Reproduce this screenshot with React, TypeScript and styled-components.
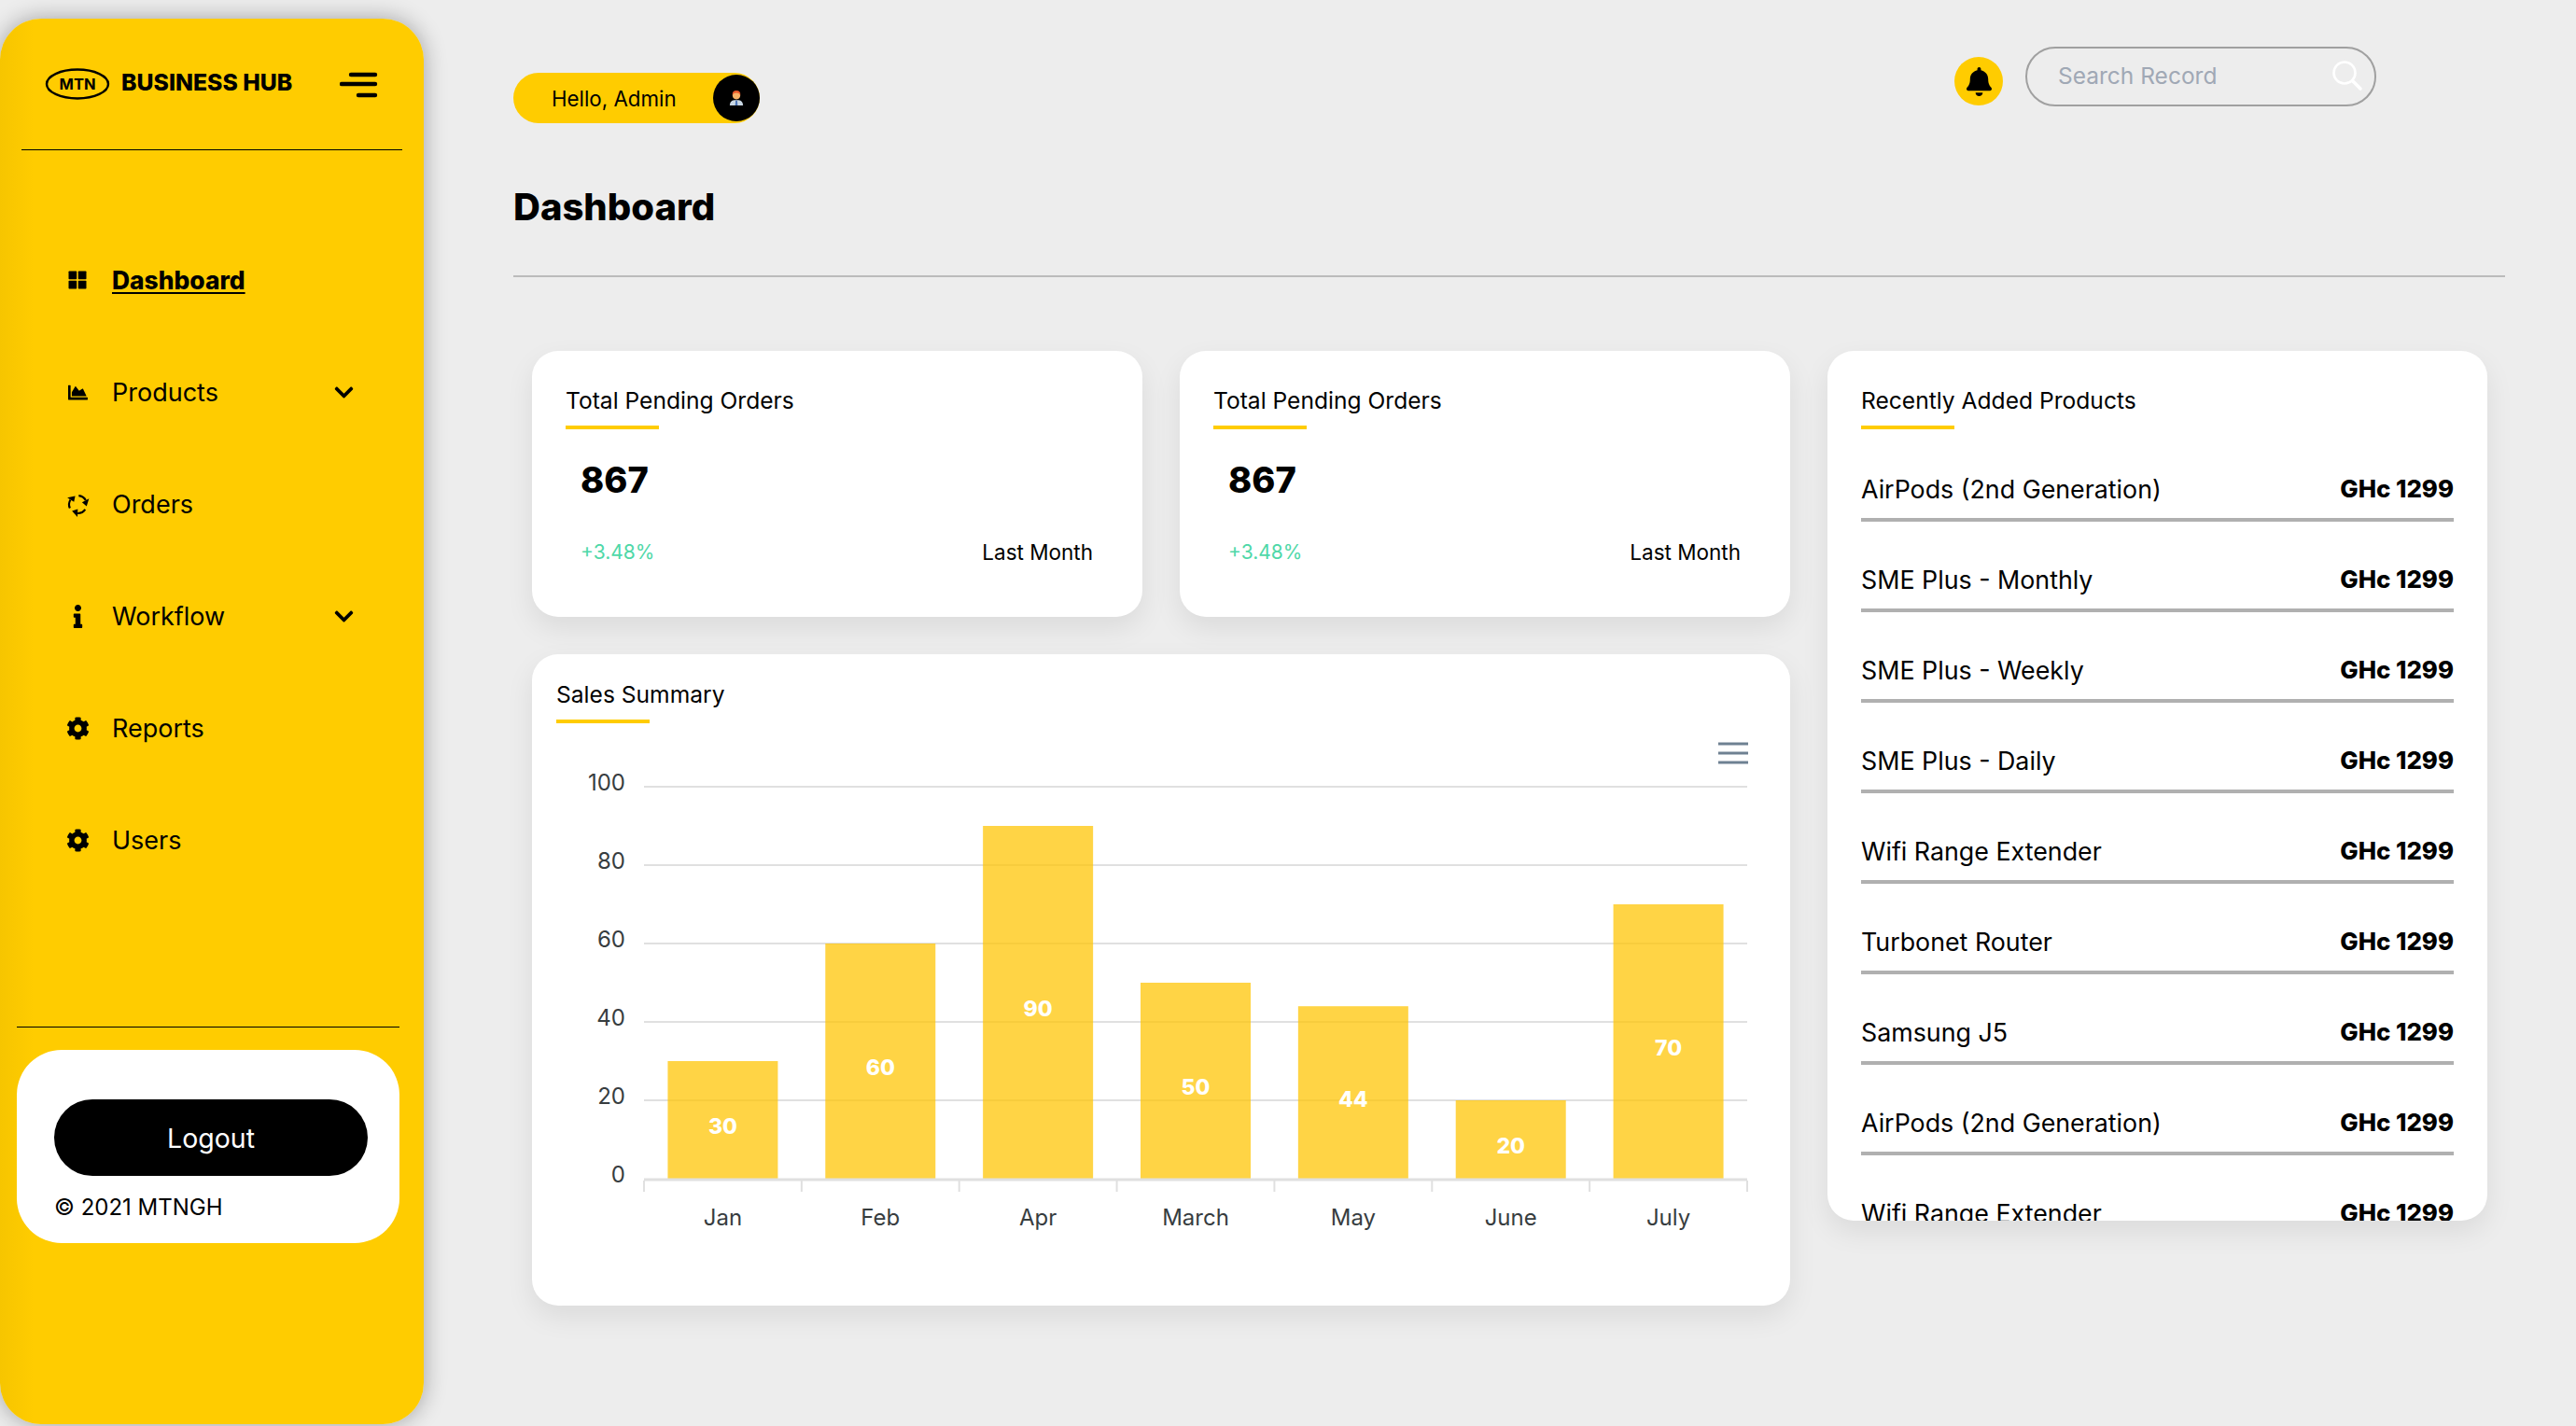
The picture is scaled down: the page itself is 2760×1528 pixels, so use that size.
import styled, { createGlobalStyle } from "styled-components";
import { FaBell, FaChartArea, FaChevronDown, FaCog, FaInfo } from "react-icons/fa";
import type { ReactNode } from "react";

const GlobalStyle = createGlobalStyle`
  html, body {
    margin: 0;
    padding: 0;
    background: #ededed;
    overflow: hidden;
  }
  * {
    box-sizing: border-box;
  }
`;

const Page = styled.div`
  display: flex;
  width: 2760px;
  height: 1528px;
  overflow: hidden;
  background: #ededed;
  font-family: "Inter", "Noto Sans", sans-serif;
  color: #000;
`;

const Sidebar = styled.aside`
  width: 454px;
  height: 1506px;
  margin-top: 20px;
  flex-shrink: 0;
  display: flex;
  flex-direction: column;
  border-radius: 44px;
  background: linear-gradient(90deg, #f6c500 0, #ffcc00 36px);
  box-shadow: 0 0 24px rgba(0, 0, 0, 0.32);
`;

const Brand = styled.div`
  height: 141px;
  margin: 0 23px;
  padding: 0 25px;
  display: flex;
  align-items: center;
  border-bottom: 1px solid #000;
`;

const BrandName = styled.span`
  margin-left: 12px;
  margin-top: -4px;
  font-size: 24.8px;
  font-weight: 800;
  white-space: nowrap;
`;

const MenuButton = styled.span`
  margin-left: auto;
  display: flex;
`;

const Nav = styled.nav`
  margin-top: 79px;
  padding-left: 66px;
  display: flex;
  flex-direction: column;
`;

const NavRow = styled.div`
  width: 314px;
  height: 120px;
  display: flex;
  align-items: center;
`;

const NavIcon = styled.span`
  width: 34px;
  margin-right: 20px;
  display: flex;
  justify-content: center;
`;

const NavLabel = styled.span<{ $active?: boolean }>`
  font-size: ${(p) => (p.$active ? "26.4px" : "27px")};
  font-weight: ${(p) => (p.$active ? 800 : 400)};
  text-decoration: ${(p) => (p.$active ? "underline" : "none")};
  text-underline-offset: 3px;
`;

const Chevron = styled.span`
  margin-left: auto;
  display: flex;
  font-size: 23px;
`;

const SidebarFoot = styled.div`
  width: 410px;
  margin: 140px 0 0 18px;
  padding-top: 24px;
  border-top: 1px solid #000;
`;

const LogoutBox = styled.div`
  height: 207px;
  padding: 53px 40px 0;
  border-radius: 48px;
  background: #fff;
`;

const LogoutButton = styled.button`
  width: 336px;
  height: 82px;
  border: 0;
  border-radius: 41px;
  background: #000;
  color: #fff;
  font-family: inherit;
  font-size: 28.5px;
  font-weight: 400;
`;

const Copyright = styled.div`
  margin-top: 19px;
  font-size: 24px;
  font-weight: 400;
`;

const Main = styled.main`
  width: 2134px;
  margin-left: 96px;
  padding-top: 50px;
  flex-shrink: 0;
`;

const TopBar = styled.header`
  display: flex;
  align-items: flex-start;
  justify-content: space-between;
  padding-right: 138px;
`;

const Greeting = styled.div`
  width: 264px;
  height: 54px;
  margin-top: 28px;
  padding: 0 0 0 41px;
  display: flex;
  align-items: center;
  justify-content: space-between;
  border-radius: 27px;
  background: #ffcc00;
  font-size: 22.3px;
  font-weight: 400;
`;

const Avatar = styled.span`
  width: 50px;
  height: 50px;
  border-radius: 50%;
  background: #000;
  display: flex;
  align-items: center;
  justify-content: center;
`;

const TopActions = styled.div`
  display: flex;
  align-items: center;
  gap: 24px;
`;

const BellBadge = styled.span`
  width: 52px;
  height: 52px;
  margin-top: 10px;
  border-radius: 50%;
  background: #ffcc00;
  display: flex;
  align-items: center;
  justify-content: center;
  font-size: 31px;
`;

const SearchBox = styled.div`
  width: 376px;
  height: 64px;
  padding: 0 12px 2px 33px;
  display: flex;
  align-items: center;
  justify-content: space-between;
  border: 2px solid #a0a0a0;
  border-radius: 32px;
  color: #a0a8b5;
  font-size: 24.5px;
  font-weight: 400;
`;

const PageTitle = styled.h1`
  margin: 64px 0 0;
  height: 53px;
  font-size: 40px;
  line-height: 51px;
  font-weight: 800;
`;

const Rule = styled.hr`
  margin: 46px 0 0;
  border: 0;
  height: 2px;
  background: #bbb;
`;

const Grid = styled.div`
  margin-top: 79px;
  padding-left: 20px;
  display: grid;
  grid-template-columns: 654px 654px 707px;
  grid-template-rows: 285px 698px;
  gap: 40px;
`;

const Card = styled.section`
  border-radius: 28px;
  background: #fff;
  box-shadow: 0 12px 30px rgba(0, 0, 0, 0.08);
`;

const StatCard = styled(Card)`
  padding: 36px 53px 0 36px;
`;

const ProductsCard = styled(Card)`
  grid-column: 3;
  grid-row: 1 / 3;
  height: 932px;
  padding: 36px 36px 0;
  overflow: hidden;
`;

const ChartCard = styled(Card)`
  grid-column: 1 / 3;
  padding: 26px 26px 0;
`;

const CardTitle = styled.h2`
  margin: 0;
  height: 48px;
  font-size: 24.6px;
  line-height: 34px;
  font-weight: 400;
  position: relative;

  &::after {
    content: "";
    position: absolute;
    left: 0;
    bottom: 0;
    width: 100px;
    height: 4px;
    background: #ffcc00;
  }
`;

const StatValue = styled.div`
  margin: 29px 0 0 16px;
  font-size: 38px;
  line-height: 50px;
  font-weight: 800;
`;

const StatFoot = styled.div`
  margin: 38px 0 0 16px;
  display: flex;
  align-items: center;
  justify-content: space-between;
  line-height: 30px;
`;

const Delta = styled.span`
  font-size: 21px;
  color: #4fd8a8;
`;

const Period = styled.span`
  font-size: 22.5px;
`;

const ProductList = styled.ul`
  list-style: none;
  margin: 2px 0 0;
  padding: 0;
`;

const ProductRow = styled.li`
  height: 97px;
  padding-top: 30px;
  display: flex;
  align-items: center;
  justify-content: space-between;
  border-bottom: 4px solid #b0b0b0;
  font-size: 26.8px;
  font-weight: 400;
`;

const Price = styled.span`
  font-size: 25.8px;
  font-weight: 800;
`;

const ChartSvg = styled.svg`
  display: block;
  margin: 0 0 0 -26px;
  font-family: "Inter", "Noto Sans", sans-serif;
`;

const AxisText = styled.text`
  fill: #373d3f;
  font-size: 24px;
`;

const DataText = styled.text`
  fill: #fff;
  font-size: 23px;
  font-weight: 800;
`;

const sales = [
  { month: "Jan", value: 30 },
  { month: "Feb", value: 60 },
  { month: "Apr", value: 90 },
  { month: "March", value: 50 },
  { month: "May", value: 44 },
  { month: "June", value: 20 },
  { month: "July", value: 70 },
];

const products = [
  "AirPods (2nd Generation)",
  "SME Plus - Monthly",
  "SME Plus - Weekly",
  "SME Plus - Daily",
  "Wifi Range Extender",
  "Turbonet Router",
  "Samsung J5",
  "AirPods (2nd Generation)",
  "Wifi Range Extender",
];

const GridGlyph = () => (
  <svg width="20" height="20" viewBox="0 0 20 20">
    <rect x="0.5" y="0.5" width="8.7" height="8.7" rx="0.8" />
    <rect x="10.8" y="0.5" width="8.7" height="8.7" rx="0.8" />
    <rect x="0.5" y="10.8" width="8.7" height="8.7" rx="0.8" />
    <rect x="10.8" y="10.8" width="8.7" height="8.7" rx="0.8" />
  </svg>
);

// three arrows chasing round a circle
const CycleGlyph = () => (
  <svg width="27" height="27" viewBox="-15 -15 30 30">
    {[0, 120, 240].map((turn) => (
      <g key={turn} transform={`rotate(${turn})`}>
        <path d="M0.9 -10.5 A10.5 10.5 0 0 1 9.3 -4.9" fill="none" stroke="#000" strokeWidth="2.4" />
        <path d="M4.9 -2.6 L13.2 -7 L10.3 2.2 Z" fill="#000" />
      </g>
    ))}
  </svg>
);

const navItems: { label: string; icon: ReactNode; active?: boolean; sub?: boolean }[] = [
  { label: "Dashboard", icon: <GridGlyph />, active: true },
  { label: "Products", icon: <FaChartArea size={21} />, sub: true },
  { label: "Orders", icon: <CycleGlyph /> },
  { label: "Workflow", icon: <FaInfo size={25} />, sub: true },
  { label: "Reports", icon: <FaCog size={25} /> },
  { label: "Users", icon: <FaCog size={25} /> },
];

const MtnLogo = () => (
  <svg width="70" height="36" viewBox="0 0 70 36">
    <ellipse cx="35" cy="18" rx="33" ry="15.5" fill="none" stroke="#000" strokeWidth="2.4" />
    <text x="35" y="24" textAnchor="middle" fontFamily="Inter, sans-serif" fontSize="16.5" fontWeight="700">
      MTN
    </text>
  </svg>
);

const MenuLines = () => (
  <svg width="42" height="30" viewBox="0 0 42 30">
    <g stroke="#000" strokeWidth="4.4" strokeLinecap="round">
      <line x1="12" y1="5" x2="38" y2="5" />
      <line x1="2" y1="15" x2="38" y2="15" />
      <line x1="20" y1="27" x2="38" y2="27" />
    </g>
  </svg>
);

const Person = () => (
  <svg width="16" height="18" viewBox="0 0 18 20">
    <path d="M1 19 Q1 13 6.5 12.5 H11.5 Q17 13 17 19 Z" fill="#c9d7e3" />
    <path d="M8 13 H10 L10.5 19 H7.5 Z" fill="#4d75b8" />
    <circle cx="9" cy="7" r="4.6" fill="#f7b267" />
    <path d="M4.2 6.5 Q3.8 1 9 1 Q14.2 1 13.8 6.5 Q12.5 3.8 9 3.8 Q5.5 3.8 4.2 6.5 Z" fill="#ea5a2a" />
  </svg>
);

const SearchGlyph = () => (
  <svg width="34" height="34" viewBox="0 0 34 34" fill="none" stroke="#fff" strokeWidth="2.6" strokeLinecap="round">
    <circle cx="14" cy="14" r="11.5" />
    <line x1="23" y1="23" x2="31" y2="31" strokeWidth="3.6" />
  </svg>
);

const SalesChart = () => {
  const left = 120;
  const right = 1302;
  const zero = 488;
  const unit = 4.2;
  const step = (right - left) / 7;
  return (
    <ChartSvg width="1348" height="620" viewBox="0 0 1348 620">
      <g stroke="#6e8192" strokeWidth="3">
        <line x1="1271" y1="22" x2="1303" y2="22" />
        <line x1="1271" y1="32" x2="1303" y2="32" />
        <line x1="1271" y1="42" x2="1303" y2="42" />
      </g>
      {[100, 80, 60, 40, 20, 0].map((tick) => {
        const y = zero - tick * unit;
        return (
          <g key={tick}>
            {tick > 0 && <line x1={left} x2={right} y1={y} y2={y} stroke="#e0e0e0" strokeWidth="2" />}
            <AxisText x={100} y={y + 4} textAnchor="end">
              {tick}
            </AxisText>
          </g>
        );
      })}
      {sales.map((item, i) => {
        const h = item.value * unit;
        const cx = left + step * (i + 0.5);
        return (
          <g key={item.month}>
            <rect x={cx - 59} y={zero - h} width={118} height={h} fill="#ffc400" fillOpacity="0.73" />
            <DataText x={cx} y={zero - h / 2 + 15} textAnchor="middle">
              {item.value}
            </DataText>
            <AxisText x={cx} y={zero + 50} textAnchor="middle">
              {item.month}
            </AxisText>
          </g>
        );
      })}
      <line x1={left} x2={right} y1={zero + 1} y2={zero + 1} stroke="#e0e0e0" strokeWidth="3" />
      {Array.from({ length: 8 }, (_, i) => (
        <line
          key={i}
          x1={left + step * i}
          x2={left + step * i}
          y1={zero + 2}
          y2={zero + 14}
          stroke="#e0e0e0"
          strokeWidth="2"
        />
      ))}
    </ChartSvg>
  );
};

export default function App() {
  return (
    <Page>
      <GlobalStyle />
      <Sidebar>
        <Brand>
          <MtnLogo />
          <BrandName>BUSINESS HUB</BrandName>
          <MenuButton>
            <MenuLines />
          </MenuButton>
        </Brand>
        <Nav>
          {navItems.map((item) => (
            <NavRow key={item.label}>
              <NavIcon>{item.icon}</NavIcon>
              <NavLabel $active={item.active}>{item.label}</NavLabel>
              {item.sub && (
                <Chevron>
                  <FaChevronDown />
                </Chevron>
              )}
            </NavRow>
          ))}
        </Nav>
        <SidebarFoot>
          <LogoutBox>
            <LogoutButton>Logout</LogoutButton>
            <Copyright>© 2021 MTNGH</Copyright>
          </LogoutBox>
        </SidebarFoot>
      </Sidebar>
      <Main>
        <TopBar>
          <Greeting>
            Hello, Admin
            <Avatar>
              <Person />
            </Avatar>
          </Greeting>
          <TopActions>
            <BellBadge>
              <FaBell />
            </BellBadge>
            <SearchBox>
              Search Record
              <SearchGlyph />
            </SearchBox>
          </TopActions>
        </TopBar>
        <PageTitle>Dashboard</PageTitle>
        <Rule />
        <Grid>
          {[0, 1].map((n) => (
            <StatCard key={n}>
              <CardTitle>Total Pending Orders</CardTitle>
              <StatValue>867</StatValue>
              <StatFoot>
                <Delta>+3.48%</Delta>
                <Period>Last Month</Period>
              </StatFoot>
            </StatCard>
          ))}
          <ProductsCard>
            <CardTitle>Recently Added Products</CardTitle>
            <ProductList>
              {products.map((name, i) => (
                <ProductRow key={i}>
                  {name}
                  <Price>GHc 1299</Price>
                </ProductRow>
              ))}
            </ProductList>
          </ProductsCard>
          <ChartCard>
            <CardTitle>Sales Summary</CardTitle>
            <SalesChart />
          </ChartCard>
        </Grid>
      </Main>
    </Page>
  );
}
